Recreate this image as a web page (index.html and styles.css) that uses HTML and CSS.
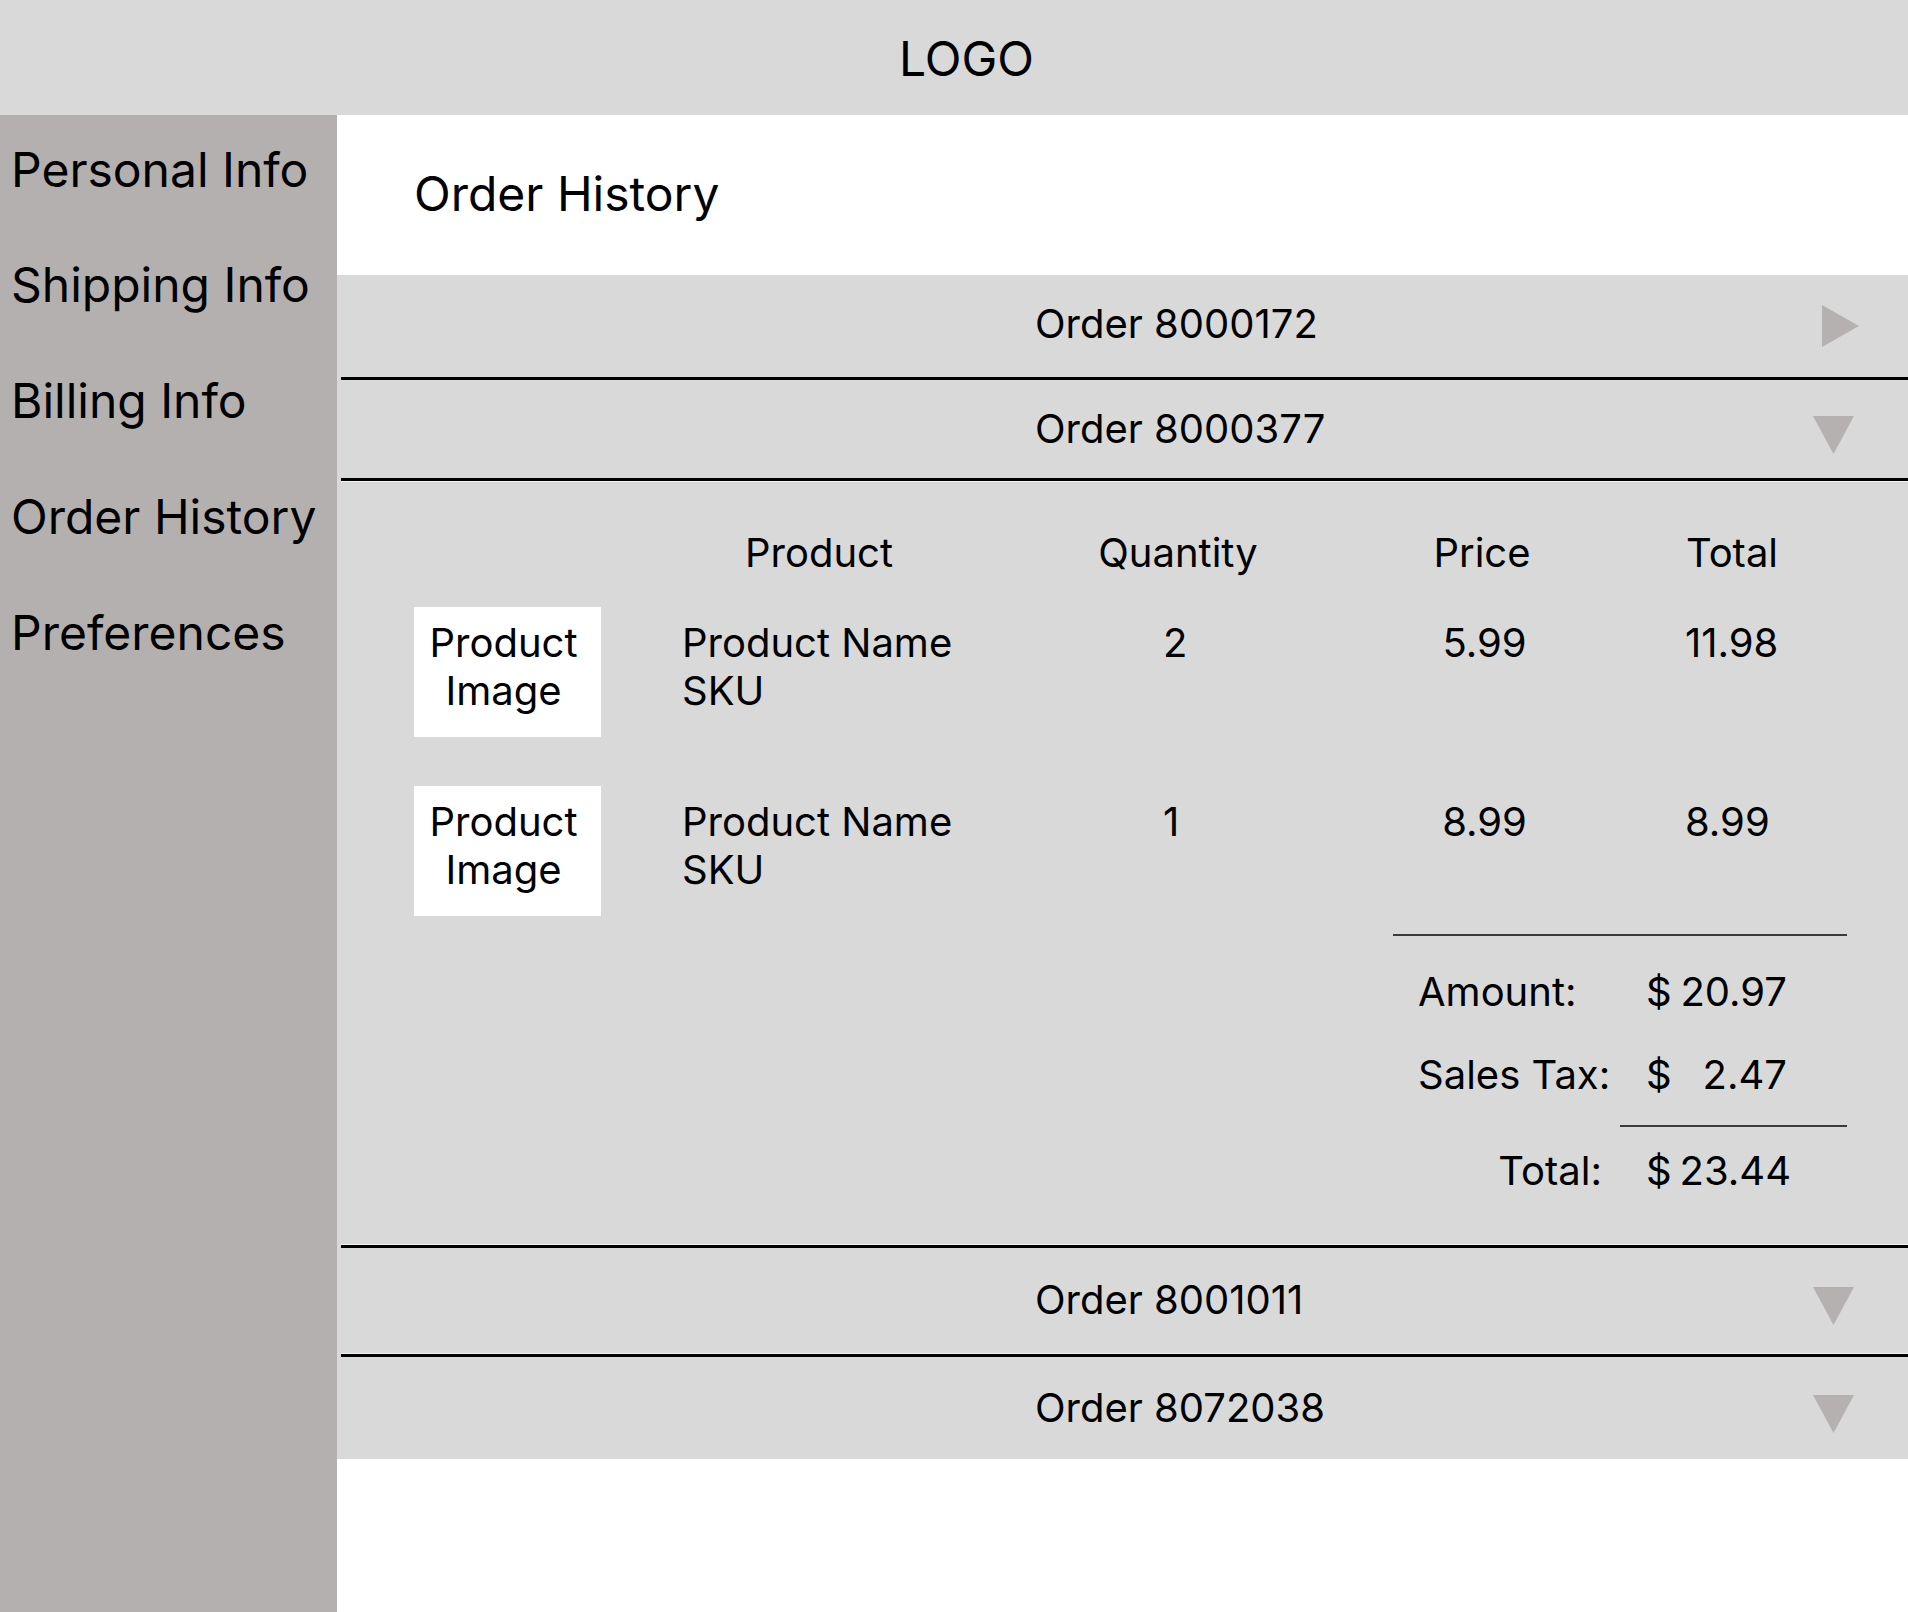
FILE: index.html
```html
<!DOCTYPE html>
<html lang="en">
<head>
<meta charset="utf-8">
<title>Order History</title>
<link rel="stylesheet" href="styles.css">
</head>
<body>
<div class="page">
  <header class="topbar"><span class="logo">LOGO</span></header>
  <nav class="sidebar">
    <a class="nav-item">Personal Info</a>
    <a class="nav-item">Shipping Info</a>
    <a class="nav-item">Billing Info</a>
    <a class="nav-item">Order History</a>
    <a class="nav-item">Preferences</a>
  </nav>
  <main class="main">
    <div class="title-area"><h1 class="title">Order History</h1></div>
    <section class="orders">
      <div class="order-row row-a">
        <span class="order-label">Order 8000172</span>
        <svg class="tri tri-right" width="37" height="42" viewBox="0 0 37 42"><polygon points="0,0 37,21 0,42"/></svg>
      </div>
      <div class="divider"></div>
      <div class="order-row row-b">
        <span class="order-label">Order 8000377</span>
        <svg class="tri tri-down" width="41" height="38" viewBox="0 0 41 38"><polygon points="0,0 41,0 20.5,38"/></svg>
      </div>
      <div class="divider divider-lite-below"></div>
      <div class="detail">
        <div class="items-row head">
          <div></div>
          <div class="col-product">Product</div>
          <div class="col-c">Quantity</div>
          <div class="col-c">Price</div>
          <div class="col-c">Total</div>
        </div>
        <div class="items-row item first">
          <div class="img-box">Product<br>Image</div>
          <div class="cell">Product Name<br>SKU</div>
          <div class="cell qty">2</div>
          <div class="cell price">5.99</div>
          <div class="cell line-total">11.98</div>
        </div>
        <div class="items-row item second">
          <div class="img-box">Product<br>Image</div>
          <div class="cell">Product Name<br>SKU</div>
          <div class="cell qty">1</div>
          <div class="cell price">8.99</div>
          <div class="cell line-total">8.99</div>
        </div>
        <div class="summary">
          <div class="sum-label">Amount:</div>
          <div class="sum-value"><span>$</span><span>20.97</span></div>
          <div class="sum-label gap">Sales Tax:</div>
          <div class="sum-value gap"><span>$</span><span>2.47</span></div>
          <div class="sum-rule"></div>
          <div class="sum-label total">Total:</div>
          <div class="sum-value total"><span>$</span><span>23.44</span></div>
        </div>
      </div>
      <div class="divider divider-lite-above"></div>
      <div class="order-row row-c">
        <span class="order-label">Order 8001011</span>
        <svg class="tri tri-down" width="41" height="38" viewBox="0 0 41 38"><polygon points="0,0 41,0 20.5,38"/></svg>
      </div>
      <div class="divider divider-lite-above"></div>
      <div class="order-row row-d">
        <span class="order-label">Order 8072038</span>
        <svg class="tri tri-down" width="41" height="38" viewBox="0 0 41 38"><polygon points="0,0 41,0 20.5,38"/></svg>
      </div>
    </section>
  </main>
</div>
</body>
</html>
```
FILE: styles.css
```css
* { box-sizing: border-box; }
html, body { margin: 0; padding: 0; }
body {
  font-family: Inter, "Noto Sans", "Liberation Sans", sans-serif;
  color: #000;
  background: #fff;
}
.page {
  display: grid;
  grid-template-columns: 337px 1fr;
  grid-template-rows: 115px 1fr;
  min-height: 1612px;
}
.topbar {
  grid-column: 1 / 3;
  background: #d9d9d9;
  display: flex;
  justify-content: center;
  padding: 30px 0 0 25px;
}
.logo { font-size: 48px; line-height: 58px; }

.sidebar {
  background: #b5b0b0;
  display: flex;
  flex-direction: column;
  gap: 57.75px;
  padding: 25.5px 0 0 11px;
}
.nav-item { font-size: 48px; line-height: 58px; white-space: nowrap; }

.main { display: flex; flex-direction: column; background: #fff; }
.title-area { height: 160px; padding: 49.5px 0 0 77px; }
.title { margin: 0; font-size: 48px; font-weight: 400; line-height: 58px; }

.orders { background: #d9d9d9; display: flex; flex-direction: column; }

.order-row {
  display: flex;
  align-items: center;
  padding-left: 698px;
  font-size: 40px;
  line-height: 46px;
}
.row-a { height: 102px; padding-bottom: 4px; }
.row-b { height: 98px; }
.row-c { height: 105px; }
.row-d { height: 102px; }
.order-label { white-space: nowrap; }
.tri { fill: #b5b1b1; margin-left: auto; }
.tri-right { margin-right: 49px; margin-top: 4px; }
.tri-down { margin-right: 54px; margin-top: 12px; }

.divider { height: 3px; margin-left: 4px; background: #000; }
.divider-lite-below { box-shadow: 0 1px 0 #f2f2f2; margin-bottom: 1px; }
.divider-lite-above { box-shadow: 0 -1px 0 #f2f2f2; margin-top: 1px; }

.detail {
  display: flex;
  flex-direction: column;
  padding: 48px 61px 50px 77px;
  font-size: 40px;
  line-height: 46px;
}
.items-row {
  display: grid;
  grid-template-columns: 268px 378px 236px 372px 128px;
}
.col-product { padding-left: 63px; }
.col-c { text-align: center; }
.item { line-height: 48px; }
.item.first { margin-top: 31px; }
.item.second { margin-top: 49px; }
.img-box {
  width: 187px;
  height: 130px;
  background: #fff;
  text-align: center;
  padding: 11.5px 8px 0 0;
}
.cell { padding-top: 11.5px; }
.qty { padding-left: 103px; }
.price { text-align: center; padding-left: 5px; }
.line-total { padding-left: 17px; }

.summary {
  width: 454px;
  margin: 18px 0 0 auto;
  border-top: 2px solid #3a3a3a;
  padding-top: 33px;
  display: grid;
  grid-template-columns: 227px 227px;
}
.sum-label { padding-left: 25px; white-space: nowrap; }
.sum-value {
  display: flex;
  justify-content: space-between;
  padding: 0 60px 0 26px;
}
.sum-value.total { padding-right: 56px; }
.gap { margin-top: 37px; }
.sum-rule { grid-column: 2; height: 2px; background: #3a3a3a; margin: 27px 0 20.5px; }
.sum-label.total { grid-column: 1; text-align: right; padding: 0 18px 0 0; }
```
